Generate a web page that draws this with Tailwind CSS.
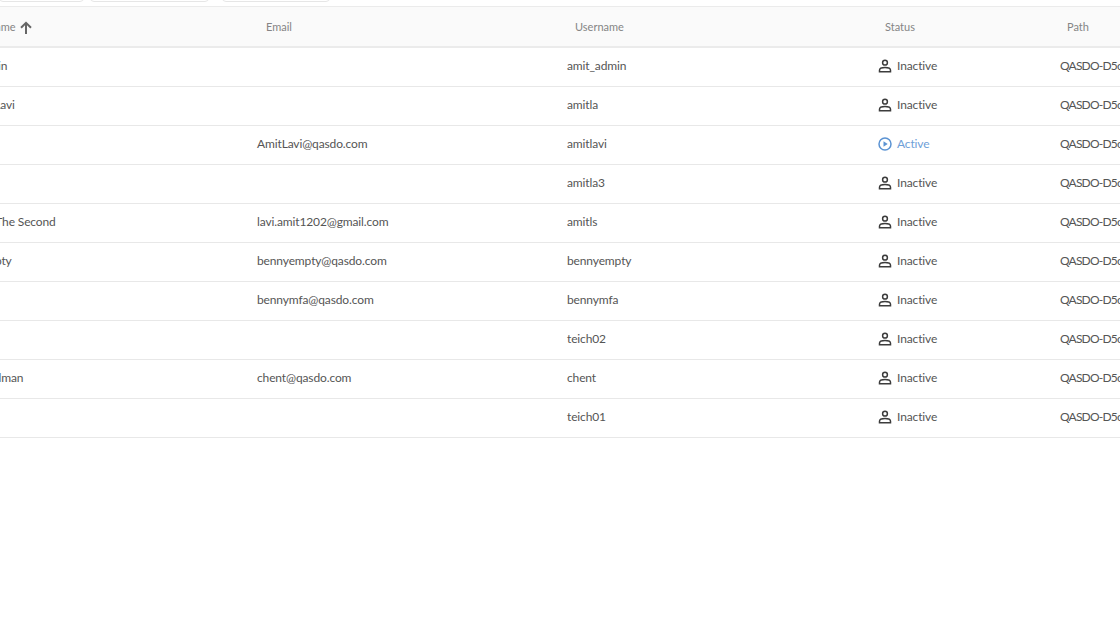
<!DOCTYPE html>
<html>
<head>
    <title>Users</title>
    <script src="https://cdn.jsdelivr.net/npm/@tailwindcss/browser@4"></script>
</head>
<body class="bg-white h-[625px] overflow-hidden font-['Lato',sans-serif] text-[12px] tracking-[-0.13px] text-[#555555]">

<!-- FILTER CHIPS (cut off by the top edge) -->
<div class="h-[6px] relative overflow-hidden">
    <div class="flex -mt-[20px] h-[22px]">
        <div class="w-[85px] -ml-[1px] border border-[#e6e6e6] rounded"></div>
        <div class="w-[119px] ml-[6px] border border-[#e6e6e6] rounded"></div>
        <div class="w-[108px] ml-[13px] border border-[#e6e6e6] rounded"></div>
    </div>
</div>

<!-- TABLE -->
<div class="overflow-hidden">
    <div class="w-[1300px] -ml-[40px]">
        <div class="grid grid-cols-[289px_310px_311px_182px_208px] h-[42px] pt-[2px] items-center bg-[#fafafa] border-t border-b-2 border-[#ebebeb] text-[11px] tracking-normal text-[#858585]">
            <div class="pl-[27px] flex items-center gap-[3px]">Name
                <svg class="w-[14px] h-[14px] text-[#666666]" viewBox="0 0 14 14" fill="none" stroke="currentColor" stroke-width="2"><path d="M7 13V2M2 6.800 7 1.800l5 5"/></svg>
            </div>
            <div class="pl-[17px]">Email</div>
            <div class="pl-[16px]">Username</div>
            <div class="pl-[15px]">Status</div>
            <div class="pl-[15px]">Path</div>
        </div>
        <div id="rows"></div>
    </div>
</div>

<script>
const users = [
    ["I Admin", "", "amit_admin", false],
    ["Amy Lavi", "", "amitla", false],
    ["Amit I", "AmitLavi@qasdo.com", "amitlavi", true],
    ["", "", "amitla3", false],
    ["Amit The Second", "lavi.amit1202@gmail.com", "amitls", false],
    ["A Empty", "bennyempty@qasdo.com", "bennyempty", false],
    ["", "bennymfa@qasdo.com", "bennymfa", false],
    ["", "", "teich02", false],
    ["Ali Teilman", "chent@qasdo.com", "chent", false],
    ["", "", "teich01", false]
];

const personIcon = `<svg class="w-[14px] h-[14px] text-[#3c3c3c]" viewBox="0 0 14 14" fill="none" stroke="currentColor" stroke-width="1.5"><circle cx="7" cy="3.700" r="2.400"/><path d="M1.500 12.800v-1.600c0-1.600 2.700-2.700 5.500-2.700s5.500 1.100 5.500 2.700v1.600z"/></svg>`;
const playIcon = `<svg class="w-[14px] h-[14px] text-[#5b93d3]" viewBox="0 0 14 14" fill="none" stroke="currentColor" stroke-width="1.500"><circle cx="7" cy="7" r="6"/><path d="M5.500 4.300v5.400L9.700 7z" fill="currentColor" stroke="none"/></svg>`;

document.getElementById("rows").innerHTML = users.map(u => `
    <div class="grid grid-cols-[289px_310px_311px_182px_208px] h-[39.06px] pb-[2px] items-center border-b border-[#e8e8e8]">
        <div class="pl-2 whitespace-nowrap">${u[0]}</div>
        <div class="pl-2">${u[1]}</div>
        <div class="pl-2">${u[2]}</div>
        <div class="pl-2 flex items-center gap-[5px] ${u[3] ? "text-[#6ea0d8]" : ""}">${u[3] ? playIcon : personIcon}${u[3] ? "Active" : "Inactive"}</div>
        <div class="pl-2 whitespace-nowrap tracking-[-0.8px]">QASDO-D5cde1f2</div>
    </div>`).join("");
</script>

</body>
</html>
